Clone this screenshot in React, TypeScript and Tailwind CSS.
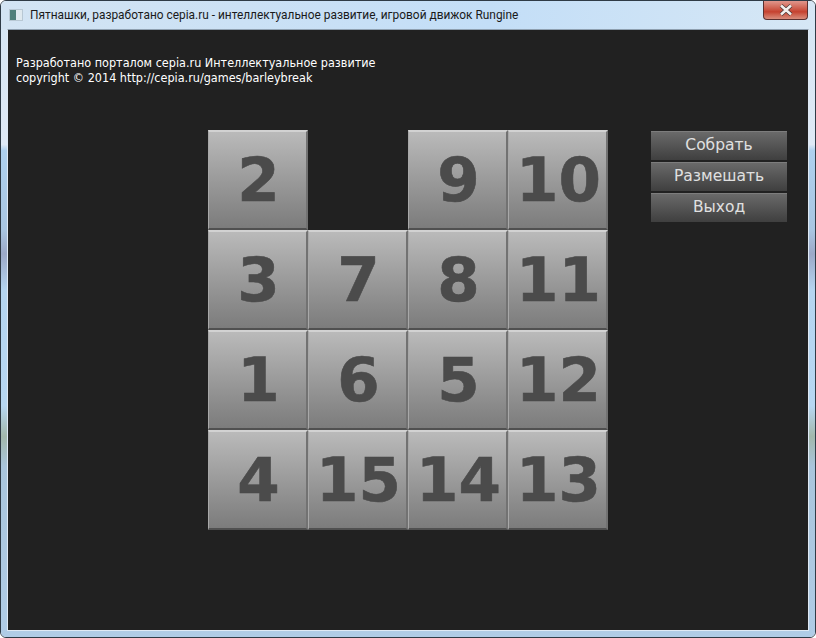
const rows = [
  [2, 0, 9, 10],
  [3, 7, 8, 11],
  [1, 6, 5, 12],
  [4, 15, 14, 13],
];

function Tile({ n }: { n: number }) {
  if (!n) return <div className="h-[100px] w-[100px]" />;
  return (
    <div className="flex h-[100px] w-[100px] items-center justify-center border-t-2 border-r-2 border-b-2 border-l border-t-[#d2d2d2] border-r-[#727272] border-b-[#505050] border-l-[#a8a8a8] bg-gradient-to-b from-[#bababa] to-[#7c7c7c] pl-[2px] font-['DejaVu_Sans',sans-serif] text-[61px] font-bold text-[#4b4b4b] [-webkit-text-stroke:0.6px_#4b4b4b]">
      {n}
    </div>
  );
}

function MenuButton({ label }: { label: string }) {
  return (
    <div className="flex h-[29px] w-[136px] items-center justify-center border-t border-[#7d7d7d] bg-gradient-to-b from-[#6a6a6a] to-[#3f3f3f] pb-[1px] font-['DejaVu_Sans',sans-serif] text-[15.5px] text-[#e0e0e0]">
      {label}
    </div>
  );
}

export default function App() {
  return (
    <div className="flex h-[638px] w-[816px] flex-col overflow-hidden rounded-[6px] border border-[#2f3b46]">
      {/* title bar */}
      <div className="flex h-[28px] shrink-0 items-start bg-gradient-to-r from-[#d3e4f3] via-[#c3def7] via-60% to-[#d6e7f5] px-[7px]">
        <div className="mt-[8px] ml-[1px] flex h-[12px] w-[14px] border border-[#b8c8d4] bg-[#dfe9ef]">
          <div className="h-full w-[6px] bg-[#4f7f7a]" />
        </div>
        <span className="mt-[6px] ml-[7px] font-['Roboto',sans-serif] text-[11.9px] leading-[17px] whitespace-nowrap text-[#1a1a1a]">
          Пятнашки, разработано cepia.ru - интеллектуальное развитие, игровой движок Rungine
        </span>
        <div className="ml-auto flex h-[19px] w-[45px] items-center justify-center rounded-b-[4px] border border-t-0 border-[#5a3030] bg-gradient-to-b from-[#e0968c] via-[#c5412f] via-60% to-[#d88c7c]">
          <svg width="16" height="12" viewBox="0 0 16 12">
            <path d="M3 1.5 L13 10.5 M13 1.5 L3 10.5" stroke="#4a3a3a" strokeWidth="4" />
            <path d="M3 1.5 L13 10.5 M13 1.5 L3 10.5" stroke="#f4f0ee" strokeWidth="2.5" />
          </svg>
        </div>
      </div>

      {/* glass frame around the client area */}
      <div className="flex min-h-0 flex-1 bg-[linear-gradient(180deg,#d6e6f4_0%,#dfe9f5_19%,#aed0ee_20%,#a9c6e2_33%,#9ca9c8_37%,#b5d5f0_43%,#b7d7f2_62%,#a3b8ac_67%,#a9c5dc_72%,#b0cce6_100%)] px-[6px] pb-[6px]">
        <div className="min-w-0 flex-1 border border-t-[#8fa0b0] border-r-[#dfe9f4] border-b-[#dfe9f4] border-l-[#dfe9f4] bg-[#212121] pt-[25px]">
          <div className="pl-[8px] font-['DejaVu_Sans_Condensed','DejaVu_Sans',sans-serif] text-[12.5px] leading-[15px] text-white">
            <div>Разработано порталом cepia.ru Интеллектуальное развитие</div>
            <div>copyright © 2014 http://cepia.ru/games/barleybreak</div>
          </div>
          <div className="mt-[45px] flex items-start pl-[200px]">
            <div className="grid grid-cols-[repeat(4,100px)]">
              {rows.flat().map((n, i) => (
                <Tile key={i} n={n} />
              ))}
            </div>
            <div className="mt-[1px] ml-[43px] flex flex-col gap-[2px]">
              <MenuButton label="Собрать" />
              <MenuButton label="Размешать" />
              <MenuButton label="Выход" />
            </div>
          </div>
        </div>
      </div>
    </div>
  );
}
